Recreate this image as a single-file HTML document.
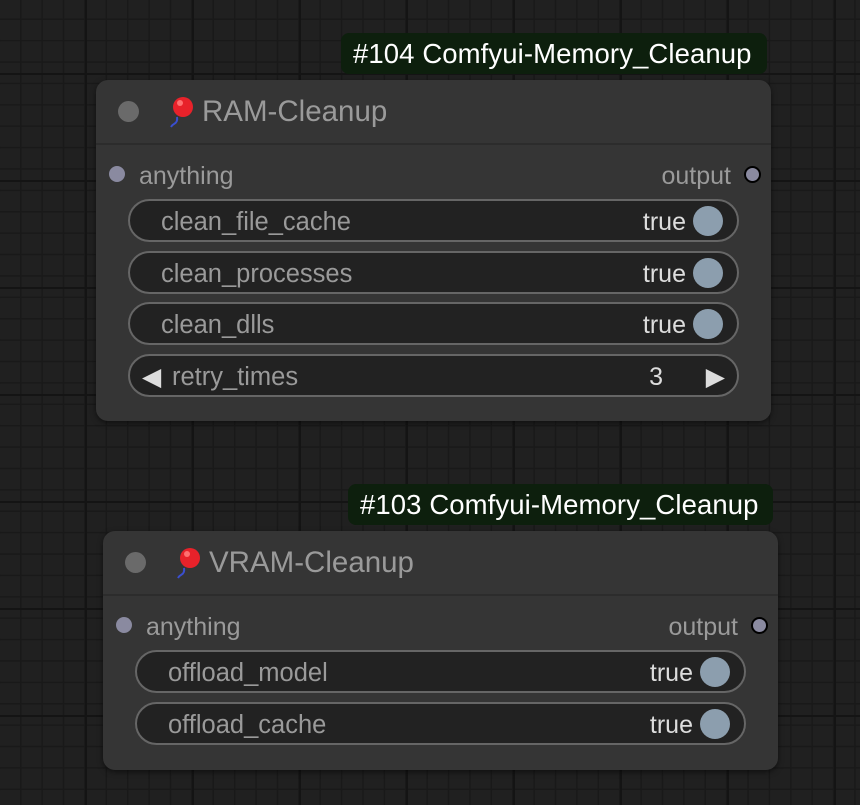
<!DOCTYPE html>
<html><head><meta charset="utf-8"><style>
*{margin:0;padding:0;box-sizing:border-box}
body{width:860px;height:805px;overflow:hidden;position:relative;font-family:"Liberation Sans",sans-serif;
background-color:#202020;
background-image:
linear-gradient(90deg,#141414 2px,transparent 2px),
linear-gradient(0deg,#141414 2px,transparent 2px),
linear-gradient(90deg,#191919 1.4px,transparent 1.4px),
linear-gradient(0deg,#191919 1.4px,transparent 1.4px);
background-size:107px 107px,107px 107px,21.4px 21.4px,21.4px 21.4px;
background-position:-22px -32px,-22px -32px,-1.4px -1.4px,-1.4px -1.4px;}
.badge{position:absolute;height:41px;background:#0d1f0d;border-radius:8px;color:#fff;font-size:27.5px;line-height:41px;padding-left:12px;white-space:nowrap;letter-spacing:0.1px}
.node{position:absolute;width:675px;background:#353535;border-radius:12px;box-shadow:0 2px 6px rgba(0,0,0,.5)}
.hdr{height:65px;border-bottom:2px solid #2c2c2c;position:relative}
.dot{position:absolute;left:22px;top:21px;width:21px;height:21px;border-radius:50%;background:#6a6a6a}
.title{position:absolute;left:106px;top:15px;color:#9a9a9a;font-size:29.5px}
.bal{position:absolute;left:72px;top:16px}
.in{position:absolute;left:13px;width:16px;height:16px;border-radius:50%;background:#8a8aa0}
.lbl{position:absolute;color:#9a9a9a;font-size:25px}
.out{position:absolute;right:10px;width:17px;height:17px;border-radius:50%;background:#8a8aa0;border:2px solid #000}
.w{position:absolute;left:32px;width:611px;height:43px;border:2px solid #666;border-radius:22px;background:#222}
.w .n{position:absolute;left:31px;top:7px;color:#9a9a9a;font-size:25.5px}
.w .v{position:absolute;right:51px;top:7px;color:#ddd;font-size:25px}
.w .k{position:absolute;right:14px;top:5px;width:30px;height:30px;border-radius:50%;background:#8c9eae}
</style></head><body>

<div class="badge" style="left:341px;top:33px;width:426px">#104 Comfyui-Memory_Cleanup</div>
<div class="node" style="left:96px;top:80px;height:341px">
 <div class="hdr"><div class="dot"></div>
 <svg class="bal" width="28" height="34" viewBox="0 0 28 34"><path d="M9 21 Q10 26 6 28 Q4 29 3 31" stroke="#3a4fd0" stroke-width="2" fill="none"/><circle cx="15" cy="11" r="10" fill="#e8222a"/><circle cx="12" cy="7" r="3" fill="#ff7070"/></svg>
 <div class="title">RAM-Cleanup</div></div>
 <div class="in" style="top:86px"></div><div class="lbl" style="left:43px;top:82px">anything</div>
 <div class="lbl" style="right:40px;top:82px">output</div><div class="out" style="top:86px"></div>
 <div class="w" style="top:119px"><span class="n">clean_file_cache</span><span class="v">true</span><span class="k"></span></div>
 <div class="w" style="top:171px"><span class="n">clean_processes</span><span class="v">true</span><span class="k"></span></div>
 <div class="w" style="top:222px"><span class="n">clean_dlls</span><span class="v">true</span><span class="k"></span></div>
 <div class="w" style="top:274px"><span style="position:absolute;left:12px;top:6px;color:#ddd;font-size:25px">◀</span><span class="n" style="left:42px">retry_times</span><span class="v" style="right:74px">3</span><span style="position:absolute;right:12px;top:6px;color:#ddd;font-size:25px">▶</span></div>
</div>

<div class="badge" style="left:348px;top:484px;width:425px">#103 Comfyui-Memory_Cleanup</div>
<div class="node" style="left:103px;top:531px;height:239px">
 <div class="hdr"><div class="dot"></div>
 <svg class="bal" width="28" height="34" viewBox="0 0 28 34"><path d="M9 21 Q10 26 6 28 Q4 29 3 31" stroke="#3a4fd0" stroke-width="2" fill="none"/><circle cx="15" cy="11" r="10" fill="#e8222a"/><circle cx="12" cy="7" r="3" fill="#ff7070"/></svg>
 <div class="title">VRAM-Cleanup</div></div>
 <div class="in" style="top:86px"></div><div class="lbl" style="left:43px;top:82px">anything</div>
 <div class="lbl" style="right:40px;top:82px">output</div><div class="out" style="top:86px"></div>
 <div class="w" style="top:119px"><span class="n">offload_model</span><span class="v">true</span><span class="k"></span></div>
 <div class="w" style="top:171px"><span class="n">offload_cache</span><span class="v">true</span><span class="k"></span></div>
</div>
</body></html>
